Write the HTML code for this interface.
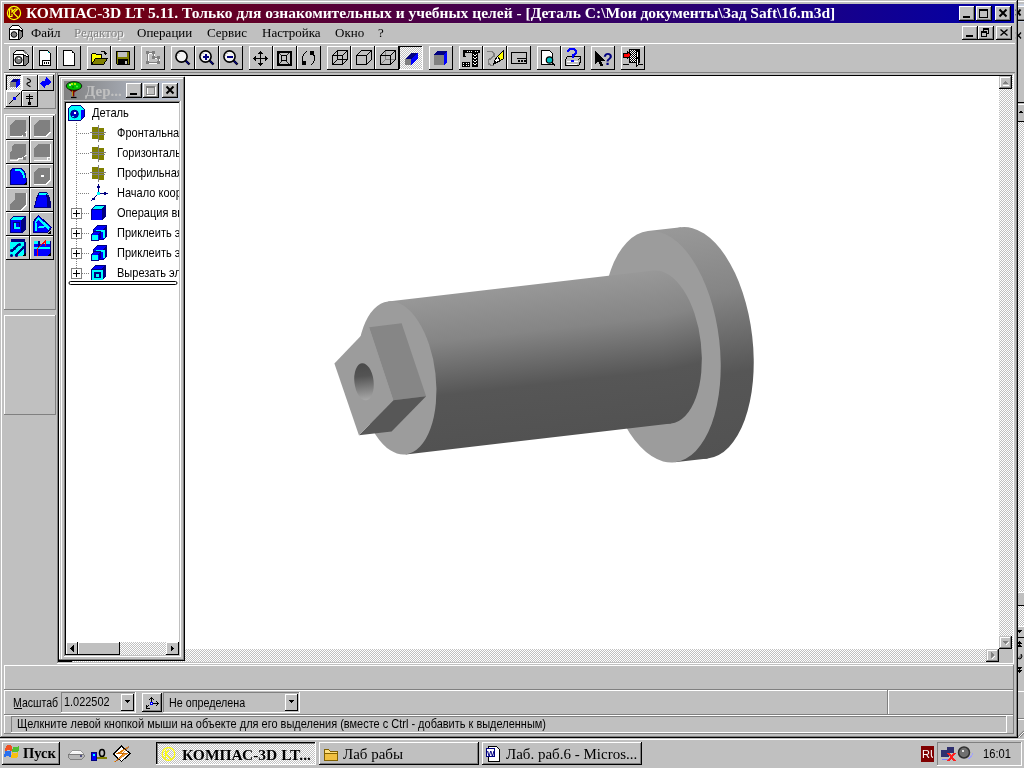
<!DOCTYPE html>
<html><head><meta charset="utf-8"><title>KOMPAS-3D LT</title>
<style>html,body{margin:0;padding:0;width:1024px;height:768px;overflow:hidden;background:#c0c0c0} text{text-rendering:optimizeLegibility}</style>
</head><body>
<svg width="1024" height="768" viewBox="0 0 1024 768" shape-rendering="crispEdges" style="display:block;will-change:transform">
<defs>
<pattern id="dith" width="2" height="2" patternUnits="userSpaceOnUse"><rect width="2" height="2" fill="#c0c0c0"/><rect x="0" y="0" width="1" height="1" fill="#fff"/><rect x="1" y="1" width="1" height="1" fill="#fff"/></pattern>
<pattern id="dith2w" width="2" height="2" patternUnits="userSpaceOnUse"><rect width="2" height="2" fill="#000"/><rect x="0" y="0" width="1" height="1" fill="#fff"/><rect x="1" y="1" width="1" height="1" fill="#fff"/></pattern>
<pattern id="dith2" width="2" height="2" patternUnits="userSpaceOnUse"><rect width="2" height="2" fill="#000"/><rect x="0" y="0" width="1" height="1" fill="#808080"/><rect x="1" y="1" width="1" height="1" fill="#808080"/></pattern>
<linearGradient id="tg" x1="0" x2="1" y1="0" y2="0"><stop offset="0" stop-color="#800000"/><stop offset="1" stop-color="#0000a8"/></linearGradient><linearGradient id="cg" x1="0" x2="1" y1="0" y2="0"><stop offset="0" stop-color="#808080"/><stop offset="1" stop-color="#c0c8d8"/></linearGradient><linearGradient id="shg" gradientUnits="userSpaceOnUse" x1="394" y1="300" x2="411" y2="453"><stop offset="0" stop-color="#989898"/><stop offset="0.3" stop-color="#858585"/><stop offset="0.65" stop-color="#565656"/><stop offset="1" stop-color="#525252"/></linearGradient><linearGradient id="rimg" gradientUnits="userSpaceOnUse" x1="680" y1="229" x2="695" y2="461"><stop offset="0" stop-color="#989898"/><stop offset="0.3" stop-color="#858585"/><stop offset="0.65" stop-color="#565656"/><stop offset="1" stop-color="#525252"/></linearGradient><linearGradient id="holeg" x1="0" y1="0" x2="0" y2="1"><stop offset="0" stop-color="#4a4a4a"/><stop offset="0.35" stop-color="#545454"/><stop offset="1" stop-color="#a8a8a8"/></linearGradient>
</defs>
<rect x="0" y="0" width="1024" height="768" fill="#c0c0c0"/>
<rect x="1018" y="0" width="6" height="738" fill="#c0c0c0"/>
<rect x="1018" y="1" width="6" height="1" fill="#fff"/>
<rect x="1018" y="4" width="6" height="18" fill="#c8d0e0"/>
<rect x="1018" y="6" width="6" height="14" fill="#c0c0c0"/>
<rect x="1018" y="6" width="6" height="1" fill="#fff"/>
<rect x="1018" y="19" width="6" height="1" fill="#808080"/>
<rect x="1018" y="20" width="6" height="1" fill="#000"/>
<path d="M1016 9.5 L1020.5 15.5 M1020.5 9.5 L1016 15.5" stroke="#000" stroke-width="2" shape-rendering="geometricPrecision"/>
<path d="M1016 32.5 L1021 38.5 M1021 32.5 L1016 38.5" stroke="#000" stroke-width="1.2" shape-rendering="geometricPrecision"/>
<rect x="1018" y="102" width="6" height="1" fill="#000"/>
<rect x="1018" y="104" width="6" height="1" fill="#fff"/>
<rect x="1018" y="105" width="6" height="16" fill="#c0c0c0"/>
<rect x="1018" y="121" width="6" height="1" fill="#000"/>
<path d="M1018 113 L1021 110 L1023 113 Z" fill="#000"/>
<rect x="1018" y="122" width="6" height="470" fill="url(#dith)"/>
<rect x="1018" y="592" width="6" height="1" fill="#fff"/>
<rect x="1018" y="593" width="6" height="12" fill="#c0c0c0"/>
<rect x="1018" y="605" width="6" height="1" fill="#000"/>
<rect x="1018" y="606" width="6" height="20" fill="url(#dith)"/>
<rect x="1018" y="626" width="6" height="1" fill="#fff"/>
<rect x="1018" y="627" width="6" height="10" fill="#c0c0c0"/>
<rect x="1018" y="637" width="6" height="1" fill="#000"/>
<path d="M1017 630 H1022 L1019.5 633 Z" fill="#000"/>
<path d="M1017 644 L1019.5 641 L1022 644 Z M1017 647 L1019.5 644 L1022 647 Z" fill="#000"/>
<path d="M1021 654 Q1023 656 1021 658.5 Q1019 659.5 1018 658" stroke="#000" stroke-width="1" fill="#808080" shape-rendering="geometricPrecision"/>
<path d="M1017 667 H1022 L1019.5 670 Z M1017 670 H1022 L1019.5 673 Z" fill="#000"/>
<rect x="1018" y="691" width="6" height="1" fill="#fff"/>
<rect x="1018" y="718" width="6" height="1" fill="#808080"/>
<rect x="1018" y="719" width="6" height="1" fill="#fff"/>
<path d="M1018 737 L1024 731 M1020 737 L1024 733" stroke="#808080" stroke-width="1.2" shape-rendering="geometricPrecision"/><path d="M1019 737 L1024 732" stroke="#fff" stroke-width="1" shape-rendering="geometricPrecision"/>
<rect x="0" y="0" width="1018" height="1" fill="#c0c0c0"/>
<rect x="0" y="0" width="1" height="738" fill="#c0c0c0"/>
<rect x="1" y="1" width="1016" height="1" fill="#fff"/>
<rect x="1" y="1" width="1" height="736" fill="#fff"/>
<rect x="0" y="737" width="1018" height="1" fill="#000"/>
<rect x="1017" y="0" width="1" height="738" fill="#000"/>
<rect x="1" y="736" width="1016" height="1" fill="#808080"/>
<rect x="1016" y="1" width="1" height="736" fill="#808080"/>
<rect x="4" y="4" width="1010" height="19" fill="url(#tg)"/>
<rect x="4" y="23" width="1010" height="1" fill="#c8c8c0"/>
<g fill="none" stroke="#ffff00" stroke-width="1.2" shape-rendering="geometricPrecision"><circle cx="14" cy="13" r="6.6"/><path d="M9.5 9 H12 V12 L15 9 H17.5 L13.5 13 L18 17.5 M9.5 9 V16.5 H12 V14"/></g>
<text x="26" y="18" font-family='"Liberation Serif", serif' font-size="15.5" fill="#fff" font-weight="bold" >КОМПАС-3D LT 5.11. Только для ознакомительных и учебных целей - [Деталь C:\Мои документы\Зад Saft\1б.m3d]</text>
<rect x="959" y="6" width="16" height="15" fill="#c0c0c0"/>
<rect x="960" y="19" width="14" height="1" fill="#808080"/>
<rect x="973" y="7" width="1" height="13" fill="#808080"/>
<rect x="959" y="6" width="16" height="1" fill="#fff"/>
<rect x="959" y="6" width="1" height="15" fill="#fff"/>
<rect x="959" y="20" width="16" height="1" fill="#000"/>
<rect x="974" y="6" width="1" height="15" fill="#000"/>
<rect x="963" y="16" width="7" height="2" fill="#000"/>
<rect x="976" y="6" width="16" height="15" fill="#c0c0c0"/>
<rect x="977" y="19" width="14" height="1" fill="#808080"/>
<rect x="990" y="7" width="1" height="13" fill="#808080"/>
<rect x="976" y="6" width="16" height="1" fill="#fff"/>
<rect x="976" y="6" width="1" height="15" fill="#fff"/>
<rect x="976" y="20" width="16" height="1" fill="#000"/>
<rect x="991" y="6" width="1" height="15" fill="#000"/>
<rect x="979" y="9" width="9" height="1" fill="#000"/>
<rect x="979" y="9" width="1" height="9" fill="#000"/>
<rect x="979" y="17" width="9" height="1" fill="#000"/>
<rect x="987" y="9" width="1" height="9" fill="#000"/>
<rect x="979" y="10" width="9" height="1" fill="#000"/>
<rect x="995" y="6" width="16" height="15" fill="#c0c0c0"/>
<rect x="996" y="19" width="14" height="1" fill="#808080"/>
<rect x="1009" y="7" width="1" height="13" fill="#808080"/>
<rect x="995" y="6" width="16" height="1" fill="#fff"/>
<rect x="995" y="6" width="1" height="15" fill="#fff"/>
<rect x="995" y="20" width="16" height="1" fill="#000"/>
<rect x="1010" y="6" width="1" height="15" fill="#000"/>
<path d="M999.5 9.5 L1006.5 16.5 M1006.5 9.5 L999.5 16.5" stroke="#000" stroke-width="2" shape-rendering="geometricPrecision"/>
<text x="31" y="37" font-family='"Liberation Serif", serif' font-size="13" fill="#000" font-weight="normal" >Файл</text>
<text x="75" y="38" font-family='"Liberation Serif", serif' font-size="13" fill="#fff" font-weight="normal" >Редактор</text>
<text x="74" y="37" font-family='"Liberation Serif", serif' font-size="13" fill="#808080" font-weight="normal" >Редактор</text>
<text x="137" y="37" font-family='"Liberation Serif", serif' font-size="13" fill="#000" font-weight="normal" >Операции</text>
<text x="207" y="37" font-family='"Liberation Serif", serif' font-size="13" fill="#000" font-weight="normal" >Сервис</text>
<text x="262" y="37" font-family='"Liberation Serif", serif' font-size="13" fill="#000" font-weight="normal" >Настройка</text>
<text x="335" y="37" font-family='"Liberation Serif", serif' font-size="13" fill="#000" font-weight="normal" >Окно</text>
<text x="378" y="37" font-family='"Liberation Serif", serif' font-size="13" fill="#000" font-weight="normal" >?</text>
<path d="M9.5 28.5 L12.5 25.5 H18.5 L22.5 29.5 V36.5 L19.5 39.5 H9.5 Z" fill="#fff" stroke="#000"/><path d="M18.5 29.5 L22.5 31.5 V36.5 L19.5 39.5 H18.5 Z" fill="#808080" stroke="#000"/><path d="M9.5 29.5 H18.5" stroke="#000"/>
<circle cx="14" cy="34.5" r="2.8" fill="#808080" stroke="#000" stroke-width="1" shape-rendering="geometricPrecision"/>
<rect x="962" y="26" width="16" height="14" fill="#c0c0c0"/>
<rect x="963" y="38" width="14" height="1" fill="#808080"/>
<rect x="976" y="27" width="1" height="12" fill="#808080"/>
<rect x="962" y="26" width="16" height="1" fill="#fff"/>
<rect x="962" y="26" width="1" height="14" fill="#fff"/>
<rect x="962" y="39" width="16" height="1" fill="#000"/>
<rect x="977" y="26" width="1" height="14" fill="#000"/>
<rect x="966" y="35" width="7" height="2" fill="#000"/>
<rect x="978" y="26" width="16" height="14" fill="#c0c0c0"/>
<rect x="979" y="38" width="14" height="1" fill="#808080"/>
<rect x="992" y="27" width="1" height="12" fill="#808080"/>
<rect x="978" y="26" width="16" height="1" fill="#fff"/>
<rect x="978" y="26" width="1" height="14" fill="#fff"/>
<rect x="978" y="39" width="16" height="1" fill="#000"/>
<rect x="993" y="26" width="1" height="14" fill="#000"/>
<rect x="983" y="28" width="6" height="1" fill="#000"/>
<rect x="983" y="28" width="1" height="6" fill="#000"/>
<rect x="983" y="33" width="6" height="1" fill="#000"/>
<rect x="988" y="28" width="1" height="6" fill="#000"/>
<rect x="983" y="29" width="6" height="1" fill="#000"/>
<rect x="981" y="31" width="6" height="6" fill="#c0c0c0"/>
<rect x="981" y="31" width="6" height="1" fill="#000"/>
<rect x="981" y="31" width="1" height="6" fill="#000"/>
<rect x="981" y="36" width="6" height="1" fill="#000"/>
<rect x="986" y="31" width="1" height="6" fill="#000"/>
<rect x="981" y="32" width="6" height="1" fill="#000"/>
<rect x="996" y="26" width="16" height="14" fill="#c0c0c0"/>
<rect x="997" y="38" width="14" height="1" fill="#808080"/>
<rect x="1010" y="27" width="1" height="12" fill="#808080"/>
<rect x="996" y="26" width="16" height="1" fill="#fff"/>
<rect x="996" y="26" width="1" height="14" fill="#fff"/>
<rect x="996" y="39" width="16" height="1" fill="#000"/>
<rect x="1011" y="26" width="1" height="14" fill="#000"/>
<path d="M1000.5 29.5 L1007.5 35.5 M1007.5 29.5 L1000.5 35.5" stroke="#000" stroke-width="1.4" shape-rendering="geometricPrecision"/>
<rect x="4" y="43" width="1011" height="1" fill="#fff"/>
<rect x="9" y="46" width="24" height="24" fill="#c0c0c0"/>
<rect x="9" y="46" width="24" height="1" fill="#fff"/>
<rect x="9" y="46" width="1" height="24" fill="#fff"/>
<rect x="9" y="69" width="24" height="1" fill="#000"/>
<rect x="32" y="46" width="1" height="24" fill="#000"/>
<rect x="33" y="46" width="24" height="24" fill="#c0c0c0"/>
<rect x="33" y="46" width="24" height="1" fill="#fff"/>
<rect x="33" y="46" width="1" height="24" fill="#fff"/>
<rect x="33" y="69" width="24" height="1" fill="#000"/>
<rect x="56" y="46" width="1" height="24" fill="#000"/>
<rect x="57" y="46" width="24" height="24" fill="#c0c0c0"/>
<rect x="57" y="46" width="24" height="1" fill="#fff"/>
<rect x="57" y="46" width="1" height="24" fill="#fff"/>
<rect x="57" y="69" width="24" height="1" fill="#000"/>
<rect x="80" y="46" width="1" height="24" fill="#000"/>
<rect x="87" y="46" width="24" height="24" fill="#c0c0c0"/>
<rect x="87" y="46" width="24" height="1" fill="#fff"/>
<rect x="87" y="46" width="1" height="24" fill="#fff"/>
<rect x="87" y="69" width="24" height="1" fill="#000"/>
<rect x="110" y="46" width="1" height="24" fill="#000"/>
<rect x="111" y="46" width="24" height="24" fill="#c0c0c0"/>
<rect x="111" y="46" width="24" height="1" fill="#fff"/>
<rect x="111" y="46" width="1" height="24" fill="#fff"/>
<rect x="111" y="69" width="24" height="1" fill="#000"/>
<rect x="134" y="46" width="1" height="24" fill="#000"/>
<rect x="141" y="46" width="24" height="24" fill="#c0c0c0"/>
<rect x="141" y="46" width="24" height="1" fill="#fff"/>
<rect x="141" y="46" width="1" height="24" fill="#fff"/>
<rect x="141" y="69" width="24" height="1" fill="#000"/>
<rect x="164" y="46" width="1" height="24" fill="#000"/>
<rect x="171" y="46" width="24" height="24" fill="#c0c0c0"/>
<rect x="171" y="46" width="24" height="1" fill="#fff"/>
<rect x="171" y="46" width="1" height="24" fill="#fff"/>
<rect x="171" y="69" width="24" height="1" fill="#000"/>
<rect x="194" y="46" width="1" height="24" fill="#000"/>
<rect x="195" y="46" width="24" height="24" fill="#c0c0c0"/>
<rect x="195" y="46" width="24" height="1" fill="#fff"/>
<rect x="195" y="46" width="1" height="24" fill="#fff"/>
<rect x="195" y="69" width="24" height="1" fill="#000"/>
<rect x="218" y="46" width="1" height="24" fill="#000"/>
<rect x="219" y="46" width="24" height="24" fill="#c0c0c0"/>
<rect x="219" y="46" width="24" height="1" fill="#fff"/>
<rect x="219" y="46" width="1" height="24" fill="#fff"/>
<rect x="219" y="69" width="24" height="1" fill="#000"/>
<rect x="242" y="46" width="1" height="24" fill="#000"/>
<rect x="249" y="46" width="24" height="24" fill="#c0c0c0"/>
<rect x="249" y="46" width="24" height="1" fill="#fff"/>
<rect x="249" y="46" width="1" height="24" fill="#fff"/>
<rect x="249" y="69" width="24" height="1" fill="#000"/>
<rect x="272" y="46" width="1" height="24" fill="#000"/>
<rect x="273" y="46" width="24" height="24" fill="#c0c0c0"/>
<rect x="273" y="46" width="24" height="1" fill="#fff"/>
<rect x="273" y="46" width="1" height="24" fill="#fff"/>
<rect x="273" y="69" width="24" height="1" fill="#000"/>
<rect x="296" y="46" width="1" height="24" fill="#000"/>
<rect x="297" y="46" width="24" height="24" fill="#c0c0c0"/>
<rect x="297" y="46" width="24" height="1" fill="#fff"/>
<rect x="297" y="46" width="1" height="24" fill="#fff"/>
<rect x="297" y="69" width="24" height="1" fill="#000"/>
<rect x="320" y="46" width="1" height="24" fill="#000"/>
<rect x="327" y="46" width="24" height="24" fill="#c0c0c0"/>
<rect x="327" y="46" width="24" height="1" fill="#fff"/>
<rect x="327" y="46" width="1" height="24" fill="#fff"/>
<rect x="327" y="69" width="24" height="1" fill="#000"/>
<rect x="350" y="46" width="1" height="24" fill="#000"/>
<rect x="351" y="46" width="24" height="24" fill="#c0c0c0"/>
<rect x="351" y="46" width="24" height="1" fill="#fff"/>
<rect x="351" y="46" width="1" height="24" fill="#fff"/>
<rect x="351" y="69" width="24" height="1" fill="#000"/>
<rect x="374" y="46" width="1" height="24" fill="#000"/>
<rect x="375" y="46" width="24" height="24" fill="#c0c0c0"/>
<rect x="375" y="46" width="24" height="1" fill="#fff"/>
<rect x="375" y="46" width="1" height="24" fill="#fff"/>
<rect x="375" y="69" width="24" height="1" fill="#000"/>
<rect x="398" y="46" width="1" height="24" fill="#000"/>
<rect x="429" y="46" width="24" height="24" fill="#c0c0c0"/>
<rect x="429" y="46" width="24" height="1" fill="#fff"/>
<rect x="429" y="46" width="1" height="24" fill="#fff"/>
<rect x="429" y="69" width="24" height="1" fill="#000"/>
<rect x="452" y="46" width="1" height="24" fill="#000"/>
<rect x="459" y="46" width="24" height="24" fill="#c0c0c0"/>
<rect x="459" y="46" width="24" height="1" fill="#fff"/>
<rect x="459" y="46" width="1" height="24" fill="#fff"/>
<rect x="459" y="69" width="24" height="1" fill="#000"/>
<rect x="482" y="46" width="1" height="24" fill="#000"/>
<rect x="483" y="46" width="24" height="24" fill="#c0c0c0"/>
<rect x="483" y="46" width="24" height="1" fill="#fff"/>
<rect x="483" y="46" width="1" height="24" fill="#fff"/>
<rect x="483" y="69" width="24" height="1" fill="#000"/>
<rect x="506" y="46" width="1" height="24" fill="#000"/>
<rect x="507" y="46" width="24" height="24" fill="#c0c0c0"/>
<rect x="507" y="46" width="24" height="1" fill="#fff"/>
<rect x="507" y="46" width="1" height="24" fill="#fff"/>
<rect x="507" y="69" width="24" height="1" fill="#000"/>
<rect x="530" y="46" width="1" height="24" fill="#000"/>
<rect x="537" y="46" width="24" height="24" fill="#c0c0c0"/>
<rect x="537" y="46" width="24" height="1" fill="#fff"/>
<rect x="537" y="46" width="1" height="24" fill="#fff"/>
<rect x="537" y="69" width="24" height="1" fill="#000"/>
<rect x="560" y="46" width="1" height="24" fill="#000"/>
<rect x="561" y="46" width="24" height="24" fill="#c0c0c0"/>
<rect x="561" y="46" width="24" height="1" fill="#fff"/>
<rect x="561" y="46" width="1" height="24" fill="#fff"/>
<rect x="561" y="69" width="24" height="1" fill="#000"/>
<rect x="584" y="46" width="1" height="24" fill="#000"/>
<rect x="591" y="46" width="24" height="24" fill="#c0c0c0"/>
<rect x="591" y="46" width="24" height="1" fill="#fff"/>
<rect x="591" y="46" width="1" height="24" fill="#fff"/>
<rect x="591" y="69" width="24" height="1" fill="#000"/>
<rect x="614" y="46" width="1" height="24" fill="#000"/>
<rect x="621" y="46" width="24" height="24" fill="#c0c0c0"/>
<rect x="621" y="46" width="24" height="1" fill="#fff"/>
<rect x="621" y="46" width="1" height="24" fill="#fff"/>
<rect x="621" y="69" width="24" height="1" fill="#000"/>
<rect x="644" y="46" width="1" height="24" fill="#000"/>
<rect x="399" y="46" width="24" height="24" fill="url(#dith)"/>
<rect x="399" y="46" width="24" height="1" fill="#000"/>
<rect x="399" y="46" width="1" height="24" fill="#000"/>
<rect x="399" y="69" width="24" height="1" fill="#fff"/>
<rect x="422" y="46" width="1" height="24" fill="#fff"/>
<rect x="4" y="72" width="1011" height="1" fill="#808080"/>
<rect x="58" y="75" width="954" height="1" fill="#000"/>
<rect x="4" y="73" width="52" height="36" fill="#c0c0c0"/>
<rect x="4" y="73" width="52" height="1" fill="#fff"/>
<rect x="4" y="73" width="1" height="36" fill="#fff"/>
<rect x="4" y="108" width="52" height="1" fill="#808080"/>
<rect x="55" y="73" width="1" height="36" fill="#808080"/>
<rect x="6" y="75" width="16" height="16" fill="url(#dith)"/>
<rect x="6" y="75" width="16" height="1" fill="#000"/>
<rect x="6" y="75" width="1" height="16" fill="#000"/>
<rect x="6" y="90" width="16" height="1" fill="#fff"/>
<rect x="21" y="75" width="1" height="16" fill="#fff"/>
<rect x="22" y="75" width="16" height="16" fill="#c0c0c0"/>
<rect x="22" y="75" width="16" height="1" fill="#fff"/>
<rect x="22" y="75" width="1" height="16" fill="#fff"/>
<rect x="22" y="90" width="16" height="1" fill="#000"/>
<rect x="37" y="75" width="1" height="16" fill="#000"/>
<rect x="38" y="75" width="16" height="16" fill="#c0c0c0"/>
<rect x="38" y="75" width="16" height="1" fill="#fff"/>
<rect x="38" y="75" width="1" height="16" fill="#fff"/>
<rect x="38" y="90" width="16" height="1" fill="#000"/>
<rect x="53" y="75" width="1" height="16" fill="#000"/>
<rect x="6" y="91" width="16" height="16" fill="#c0c0c0"/>
<rect x="6" y="91" width="16" height="1" fill="#fff"/>
<rect x="6" y="91" width="1" height="16" fill="#fff"/>
<rect x="6" y="106" width="16" height="1" fill="#000"/>
<rect x="21" y="91" width="1" height="16" fill="#000"/>
<rect x="22" y="91" width="16" height="16" fill="#c0c0c0"/>
<rect x="22" y="91" width="16" height="1" fill="#fff"/>
<rect x="22" y="91" width="1" height="16" fill="#fff"/>
<rect x="22" y="106" width="16" height="1" fill="#000"/>
<rect x="37" y="91" width="1" height="16" fill="#000"/>
<rect x="4" y="114" width="52" height="196" fill="#c0c0c0"/>
<rect x="4" y="114" width="52" height="1" fill="#fff"/>
<rect x="4" y="114" width="1" height="196" fill="#fff"/>
<rect x="4" y="309" width="52" height="1" fill="#808080"/>
<rect x="55" y="114" width="1" height="196" fill="#808080"/>
<rect x="6" y="116" width="24" height="24" fill="#c0c0c0"/>
<rect x="6" y="116" width="24" height="1" fill="#fff"/>
<rect x="6" y="116" width="1" height="24" fill="#fff"/>
<rect x="6" y="139" width="24" height="1" fill="#000"/>
<rect x="29" y="116" width="1" height="24" fill="#000"/>
<rect x="30" y="116" width="24" height="24" fill="#c0c0c0"/>
<rect x="30" y="116" width="24" height="1" fill="#fff"/>
<rect x="30" y="116" width="1" height="24" fill="#fff"/>
<rect x="30" y="139" width="24" height="1" fill="#000"/>
<rect x="53" y="116" width="1" height="24" fill="#000"/>
<rect x="6" y="140" width="24" height="24" fill="#c0c0c0"/>
<rect x="6" y="140" width="24" height="1" fill="#fff"/>
<rect x="6" y="140" width="1" height="24" fill="#fff"/>
<rect x="6" y="163" width="24" height="1" fill="#000"/>
<rect x="29" y="140" width="1" height="24" fill="#000"/>
<rect x="30" y="140" width="24" height="24" fill="#c0c0c0"/>
<rect x="30" y="140" width="24" height="1" fill="#fff"/>
<rect x="30" y="140" width="1" height="24" fill="#fff"/>
<rect x="30" y="163" width="24" height="1" fill="#000"/>
<rect x="53" y="140" width="1" height="24" fill="#000"/>
<rect x="6" y="164" width="24" height="24" fill="#c0c0c0"/>
<rect x="6" y="164" width="24" height="1" fill="#fff"/>
<rect x="6" y="164" width="1" height="24" fill="#fff"/>
<rect x="6" y="187" width="24" height="1" fill="#000"/>
<rect x="29" y="164" width="1" height="24" fill="#000"/>
<rect x="30" y="164" width="24" height="24" fill="#c0c0c0"/>
<rect x="30" y="164" width="24" height="1" fill="#fff"/>
<rect x="30" y="164" width="1" height="24" fill="#fff"/>
<rect x="30" y="187" width="24" height="1" fill="#000"/>
<rect x="53" y="164" width="1" height="24" fill="#000"/>
<rect x="6" y="188" width="24" height="24" fill="#c0c0c0"/>
<rect x="6" y="188" width="24" height="1" fill="#fff"/>
<rect x="6" y="188" width="1" height="24" fill="#fff"/>
<rect x="6" y="211" width="24" height="1" fill="#000"/>
<rect x="29" y="188" width="1" height="24" fill="#000"/>
<rect x="30" y="188" width="24" height="24" fill="#c0c0c0"/>
<rect x="30" y="188" width="24" height="1" fill="#fff"/>
<rect x="30" y="188" width="1" height="24" fill="#fff"/>
<rect x="30" y="211" width="24" height="1" fill="#000"/>
<rect x="53" y="188" width="1" height="24" fill="#000"/>
<rect x="6" y="212" width="24" height="24" fill="#c0c0c0"/>
<rect x="6" y="212" width="24" height="1" fill="#fff"/>
<rect x="6" y="212" width="1" height="24" fill="#fff"/>
<rect x="6" y="235" width="24" height="1" fill="#000"/>
<rect x="29" y="212" width="1" height="24" fill="#000"/>
<rect x="30" y="212" width="24" height="24" fill="#c0c0c0"/>
<rect x="30" y="212" width="24" height="1" fill="#fff"/>
<rect x="30" y="212" width="1" height="24" fill="#fff"/>
<rect x="30" y="235" width="24" height="1" fill="#000"/>
<rect x="53" y="212" width="1" height="24" fill="#000"/>
<rect x="6" y="236" width="24" height="24" fill="#c0c0c0"/>
<rect x="6" y="236" width="24" height="1" fill="#fff"/>
<rect x="6" y="236" width="1" height="24" fill="#fff"/>
<rect x="6" y="259" width="24" height="1" fill="#000"/>
<rect x="29" y="236" width="1" height="24" fill="#000"/>
<rect x="30" y="236" width="24" height="24" fill="#c0c0c0"/>
<rect x="30" y="236" width="24" height="1" fill="#fff"/>
<rect x="30" y="236" width="1" height="24" fill="#fff"/>
<rect x="30" y="259" width="24" height="1" fill="#000"/>
<rect x="53" y="236" width="1" height="24" fill="#000"/>
<rect x="4" y="315" width="52" height="100" fill="#c0c0c0"/>
<rect x="4" y="315" width="52" height="1" fill="#fff"/>
<rect x="4" y="315" width="1" height="100" fill="#fff"/>
<rect x="4" y="414" width="52" height="1" fill="#808080"/>
<rect x="55" y="315" width="1" height="100" fill="#808080"/>
<rect x="57" y="73" width="1" height="590" fill="#808080"/>
<rect x="58" y="75" width="1" height="587" fill="#000"/>
<rect x="59" y="76" width="940" height="573" fill="#fff"/>
<rect x="1013" y="74" width="1" height="590" fill="#fff"/>
<rect x="57" y="663" width="957" height="1" fill="#fff"/>
<rect x="999" y="76" width="14" height="573" fill="url(#dith)"/>
<rect x="999" y="76" width="13" height="13" fill="#c0c0c0"/>
<rect x="1000" y="77" width="11" height="1" fill="#fff"/>
<rect x="1000" y="77" width="1" height="11" fill="#fff"/>
<rect x="1000" y="87" width="11" height="1" fill="#808080"/>
<rect x="1010" y="77" width="1" height="11" fill="#808080"/>
<rect x="999" y="76" width="13" height="1" fill="#c0c0c0"/>
<rect x="999" y="76" width="1" height="13" fill="#c0c0c0"/>
<rect x="999" y="88" width="13" height="1" fill="#000"/>
<rect x="1011" y="76" width="1" height="13" fill="#000"/>
<rect x="999" y="636" width="13" height="13" fill="#c0c0c0"/>
<rect x="1000" y="637" width="11" height="1" fill="#fff"/>
<rect x="1000" y="637" width="1" height="11" fill="#fff"/>
<rect x="1000" y="647" width="11" height="1" fill="#808080"/>
<rect x="1010" y="637" width="1" height="11" fill="#808080"/>
<rect x="999" y="636" width="13" height="1" fill="#c0c0c0"/>
<rect x="999" y="636" width="1" height="13" fill="#c0c0c0"/>
<rect x="999" y="648" width="13" height="1" fill="#000"/>
<rect x="1011" y="636" width="1" height="13" fill="#000"/>
<path d="M1002 84 H1008 L1005 81 Z" fill="#808080"/><path d="M1003 85 H1009" stroke="#fff" stroke-width="1"/>
<path d="M1002 641 H1008 L1005 644 Z" fill="#808080"/><path d="M1006 645 L1009 642" stroke="#fff" stroke-width="1"/>
<rect x="59" y="649" width="927" height="13" fill="url(#dith)"/>
<rect x="58" y="661" width="14" height="1" fill="#000"/>
<rect x="986" y="649" width="13" height="13" fill="#c0c0c0"/>
<rect x="987" y="650" width="11" height="1" fill="#fff"/>
<rect x="987" y="650" width="1" height="11" fill="#fff"/>
<rect x="987" y="660" width="11" height="1" fill="#808080"/>
<rect x="997" y="650" width="1" height="11" fill="#808080"/>
<rect x="986" y="649" width="13" height="1" fill="#c0c0c0"/>
<rect x="986" y="649" width="1" height="13" fill="#c0c0c0"/>
<rect x="986" y="661" width="13" height="1" fill="#000"/>
<rect x="998" y="649" width="1" height="13" fill="#000"/>
<path d="M991 652 V658 L994 655 Z" fill="#808080"/><path d="M992 659 L995 656" stroke="#fff" stroke-width="1"/>
<rect x="999" y="649" width="14" height="13" fill="#c0c0c0"/>
<rect x="59" y="76" width="126" height="585" fill="#c0c0c0"/>
<rect x="59" y="76" width="1" height="584" fill="#fff"/>
<rect x="59" y="76" width="125" height="1" fill="#fff"/>
<rect x="61" y="78" width="1" height="581" fill="#fff"/>
<rect x="61" y="78" width="122" height="1" fill="#fff"/>
<rect x="184" y="77" width="1" height="584" fill="#000"/>
<rect x="58" y="660" width="127" height="1" fill="#000"/>
<rect x="183" y="77" width="1" height="583" fill="#808080"/>
<rect x="59" y="659" width="125" height="1" fill="#808080"/>
<rect x="64" y="81" width="116" height="19" fill="url(#cg)"/>
<text x="85" y="96" font-family='"Liberation Serif", serif' font-size="15" fill="#c0c0c0" font-weight="bold" >Дер...</text>
<rect x="126" y="83" width="16" height="15" fill="#c0c0c0"/>
<rect x="127" y="96" width="14" height="1" fill="#808080"/>
<rect x="140" y="84" width="1" height="13" fill="#808080"/>
<rect x="126" y="83" width="16" height="1" fill="#fff"/>
<rect x="126" y="83" width="1" height="15" fill="#fff"/>
<rect x="126" y="97" width="16" height="1" fill="#000"/>
<rect x="141" y="83" width="1" height="15" fill="#000"/>
<rect x="130" y="93" width="7" height="2" fill="#000"/>
<rect x="143" y="83" width="16" height="15" fill="#c0c0c0"/>
<rect x="144" y="96" width="14" height="1" fill="#808080"/>
<rect x="157" y="84" width="1" height="13" fill="#808080"/>
<rect x="143" y="83" width="16" height="1" fill="#fff"/>
<rect x="143" y="83" width="1" height="15" fill="#fff"/>
<rect x="143" y="97" width="16" height="1" fill="#000"/>
<rect x="158" y="83" width="1" height="15" fill="#000"/>
<rect x="147" y="87" width="9" height="1" fill="#fff"/>
<rect x="147" y="87" width="1" height="9" fill="#fff"/>
<rect x="147" y="95" width="9" height="1" fill="#fff"/>
<rect x="155" y="87" width="1" height="9" fill="#fff"/>
<rect x="146" y="86" width="9" height="1" fill="#808080"/>
<rect x="146" y="86" width="1" height="9" fill="#808080"/>
<rect x="146" y="94" width="9" height="1" fill="#808080"/>
<rect x="154" y="86" width="1" height="9" fill="#808080"/>
<rect x="146" y="87" width="9" height="1" fill="#808080"/>
<rect x="162" y="83" width="16" height="15" fill="#c0c0c0"/>
<rect x="163" y="96" width="14" height="1" fill="#808080"/>
<rect x="176" y="84" width="1" height="13" fill="#808080"/>
<rect x="162" y="83" width="16" height="1" fill="#fff"/>
<rect x="162" y="83" width="1" height="15" fill="#fff"/>
<rect x="162" y="97" width="16" height="1" fill="#000"/>
<rect x="177" y="83" width="1" height="15" fill="#000"/>
<path d="M166.5 86.5 L173.5 93.5 M173.5 86.5 L166.5 93.5" stroke="#000" stroke-width="2" shape-rendering="geometricPrecision"/>
<g shape-rendering="geometricPrecision"><path d="M73.5 89 V96.5 M73.5 92 L70 89.5 M73.5 92 L77 89.5" stroke="#800000" stroke-width="1.6" fill="none"/><path d="M72.5 89.5 V96" stroke="#c0a000" stroke-width="0.8"/><path d="M71 97.5 H76.5" stroke="#000" stroke-width="1.2"/><ellipse cx="74" cy="86" rx="7.8" ry="4.3" fill="#00c000" stroke="#000" stroke-width="0.8"/><circle cx="70" cy="85" r="0.9" fill="#fff"/><circle cx="72" cy="84" r="0.9" fill="#ffff00"/><circle cx="75" cy="84" r="0.9" fill="#ffff00"/><circle cx="77" cy="86.5" r="1" fill="#40ff40"/><circle cx="73" cy="87" r="1" fill="#008000"/></g>
<rect x="66" y="103" width="113" height="552" fill="#fff"/>
<rect x="64" y="101" width="117" height="1" fill="#808080"/>
<rect x="64" y="101" width="1" height="556" fill="#808080"/>
<rect x="65" y="102" width="115" height="1" fill="#000"/>
<rect x="65" y="102" width="1" height="554" fill="#000"/>
<rect x="179" y="102" width="1" height="554" fill="#c0c0c0"/>
<rect x="65" y="655" width="115" height="1" fill="#c0c0c0"/>
<rect x="180" y="101" width="1" height="556" fill="#fff"/>
<rect x="64" y="656" width="117" height="1" fill="#fff"/>
<rect x="66" y="642" width="113" height="13" fill="url(#dith)"/>
<rect x="66" y="642" width="12" height="13" fill="#c0c0c0"/>
<rect x="66" y="642" width="12" height="1" fill="#fff"/>
<rect x="66" y="642" width="1" height="13" fill="#fff"/>
<rect x="66" y="654" width="12" height="1" fill="#000"/>
<rect x="77" y="642" width="1" height="13" fill="#000"/>
<rect x="78" y="642" width="42" height="13" fill="#c0c0c0"/>
<rect x="78" y="642" width="42" height="1" fill="#fff"/>
<rect x="78" y="642" width="1" height="13" fill="#fff"/>
<rect x="78" y="654" width="42" height="1" fill="#000"/>
<rect x="119" y="642" width="1" height="13" fill="#000"/>
<rect x="166" y="642" width="13" height="13" fill="#c0c0c0"/>
<rect x="166" y="642" width="13" height="1" fill="#fff"/>
<rect x="166" y="642" width="1" height="13" fill="#fff"/>
<rect x="166" y="654" width="13" height="1" fill="#000"/>
<rect x="178" y="642" width="1" height="13" fill="#000"/>
<path d="M70 648.5 L73.5 645 V652 Z" fill="#000"/><path d="M174 648.5 L170.5 645 V652 Z" fill="#000"/>
<rect x="4" y="665" width="1010" height="25" fill="#c0c0c0"/>
<rect x="4" y="665" width="1010" height="1" fill="#fff"/>
<rect x="4" y="665" width="1" height="25" fill="#fff"/>
<rect x="4" y="689" width="1010" height="1" fill="#808080"/>
<rect x="1013" y="665" width="1" height="25" fill="#808080"/>
<rect x="4" y="690" width="1010" height="25" fill="#c0c0c0"/>
<rect x="4" y="690" width="1010" height="1" fill="#fff"/>
<rect x="4" y="690" width="1" height="25" fill="#fff"/>
<rect x="4" y="714" width="1010" height="1" fill="#808080"/>
<rect x="1013" y="690" width="1" height="25" fill="#808080"/>
<rect x="887" y="690" width="1" height="25" fill="#808080"/>
<rect x="888" y="691" width="1" height="23" fill="#fff"/>
<text transform="translate(13 707) scale(0.88 1)" x="0" y="0" font-family='"Liberation Sans", sans-serif' font-size="12" fill="#000" >Масштаб</text>
<rect x="14" y="708" width="8" height="1" fill="#000"/>
<rect x="61" y="692" width="75" height="21" fill="#c0c0c0"/>
<rect x="61" y="692" width="75" height="1" fill="#808080"/>
<rect x="61" y="692" width="1" height="21" fill="#808080"/>
<rect x="61" y="712" width="75" height="1" fill="#fff"/>
<rect x="135" y="692" width="1" height="21" fill="#fff"/>
<text transform="translate(64 706) scale(0.91 1)" x="0" y="0" font-family='"Liberation Sans", sans-serif' font-size="12" fill="#000" >1.022502</text>
<rect x="121" y="694" width="13" height="17" fill="#c0c0c0"/>
<rect x="121" y="694" width="13" height="1" fill="#fff"/>
<rect x="121" y="694" width="1" height="17" fill="#fff"/>
<rect x="121" y="710" width="13" height="1" fill="#000"/>
<rect x="133" y="694" width="1" height="17" fill="#000"/>
<path d="M124 700 H130 L127 703 Z" fill="#000"/>
<rect x="142" y="693" width="20" height="19" fill="#c0c0c0"/>
<rect x="143" y="710" width="18" height="1" fill="#808080"/>
<rect x="160" y="694" width="1" height="17" fill="#808080"/>
<rect x="142" y="693" width="20" height="1" fill="#fff"/>
<rect x="142" y="693" width="1" height="19" fill="#fff"/>
<rect x="142" y="711" width="20" height="1" fill="#000"/>
<rect x="161" y="693" width="1" height="19" fill="#000"/>
<rect x="151" y="697" width="1" height="6" fill="#000"/>
<rect x="150" y="698" width="1" height="1" fill="#000"/>
<rect x="152" y="698" width="1" height="1" fill="#000"/>
<rect x="149" y="699" width="1" height="1" fill="#000"/>
<rect x="153" y="699" width="1" height="1" fill="#000"/>
<rect x="153" y="703" width="6" height="1" fill="#000"/>
<rect x="156" y="701" width="1" height="1" fill="#000"/>
<rect x="157" y="702" width="1" height="1" fill="#000"/>
<rect x="157" y="704" width="1" height="1" fill="#000"/>
<rect x="156" y="705" width="1" height="1" fill="#000"/>
<rect x="148" y="705" width="1" height="1" fill="#000"/>
<rect x="147" y="706" width="1" height="1" fill="#000"/>
<rect x="146" y="705" width="1" height="4" fill="#000"/>
<rect x="146" y="708" width="4" height="1" fill="#000"/>
<rect x="150" y="702" width="3" height="3" fill="#0000ff"/>
<rect x="151" y="703" width="1" height="1" fill="#fff"/>
<rect x="163" y="692" width="137" height="21" fill="#c0c0c0"/>
<rect x="163" y="692" width="137" height="1" fill="#808080"/>
<rect x="163" y="692" width="1" height="21" fill="#808080"/>
<rect x="163" y="712" width="137" height="1" fill="#fff"/>
<rect x="299" y="692" width="1" height="21" fill="#fff"/>
<text transform="translate(169 707) scale(0.894 1)" x="0" y="0" font-family='"Liberation Sans", sans-serif' font-size="12" fill="#000" >Не определена</text>
<rect x="285" y="694" width="13" height="17" fill="#c0c0c0"/>
<rect x="285" y="694" width="13" height="1" fill="#fff"/>
<rect x="285" y="694" width="1" height="17" fill="#fff"/>
<rect x="285" y="710" width="13" height="1" fill="#000"/>
<rect x="297" y="694" width="1" height="17" fill="#000"/>
<path d="M288 700 H294 L291 703 Z" fill="#000"/>
<rect x="4" y="715" width="1010" height="19" fill="#c0c0c0"/>
<rect x="4" y="715" width="1010" height="1" fill="#fff"/>
<rect x="4" y="715" width="1" height="19" fill="#fff"/>
<rect x="4" y="733" width="1010" height="1" fill="#808080"/>
<rect x="1013" y="715" width="1" height="19" fill="#808080"/>
<rect x="11" y="716" width="996" height="17" fill="#c0c0c0"/>
<rect x="11" y="716" width="996" height="1" fill="#808080"/>
<rect x="11" y="716" width="1" height="17" fill="#808080"/>
<rect x="11" y="732" width="996" height="1" fill="#fff"/>
<rect x="1006" y="716" width="1" height="17" fill="#fff"/>
<text transform="translate(17 728) scale(0.915 1)" x="0" y="0" font-family='"Liberation Sans", sans-serif' font-size="12" fill="#000" >Щелкните левой кнопкой мыши на объекте для его выделения (вместе с Ctrl - добавить к выделенным)</text>
<rect x="0" y="738" width="1024" height="30" fill="#c0c0c0"/>
<rect x="0" y="739" width="1024" height="1" fill="#fff"/>
<rect x="2" y="742" width="58" height="23" fill="#c0c0c0"/>
<rect x="3" y="763" width="56" height="1" fill="#808080"/>
<rect x="58" y="743" width="1" height="21" fill="#808080"/>
<rect x="2" y="742" width="58" height="1" fill="#fff"/>
<rect x="2" y="742" width="1" height="23" fill="#fff"/>
<rect x="2" y="764" width="58" height="1" fill="#000"/>
<rect x="59" y="742" width="1" height="23" fill="#000"/>
<text x="23" y="758" font-family='"Liberation Serif", serif' font-size="14.5" fill="#000" font-weight="bold" >Пуск</text>
<rect x="156" y="742" width="160" height="23" fill="url(#dith)"/>
<rect x="156" y="742" width="160" height="1" fill="#000"/>
<rect x="156" y="742" width="1" height="23" fill="#000"/>
<rect x="157" y="743" width="158" height="1" fill="#808080"/>
<rect x="157" y="743" width="1" height="21" fill="#808080"/>
<rect x="156" y="764" width="160" height="1" fill="#fff"/>
<rect x="315" y="742" width="1" height="23" fill="#fff"/>
<text x="182" y="760" font-family='"Liberation Serif", serif' font-size="15.5" fill="#000" font-weight="bold" >КОМПАС-3D LT...</text>
<rect x="319" y="742" width="160" height="23" fill="#c0c0c0"/>
<rect x="320" y="763" width="158" height="1" fill="#808080"/>
<rect x="477" y="743" width="1" height="21" fill="#808080"/>
<rect x="319" y="742" width="160" height="1" fill="#fff"/>
<rect x="319" y="742" width="1" height="23" fill="#fff"/>
<rect x="319" y="764" width="160" height="1" fill="#000"/>
<rect x="478" y="742" width="1" height="23" fill="#000"/>
<text x="343" y="759" font-family='"Liberation Serif", serif' font-size="15" fill="#000" font-weight="normal" >Лаб рабы</text>
<rect x="482" y="742" width="160" height="23" fill="#c0c0c0"/>
<rect x="483" y="763" width="158" height="1" fill="#808080"/>
<rect x="640" y="743" width="1" height="21" fill="#808080"/>
<rect x="482" y="742" width="160" height="1" fill="#fff"/>
<rect x="482" y="742" width="1" height="23" fill="#fff"/>
<rect x="482" y="764" width="160" height="1" fill="#000"/>
<rect x="641" y="742" width="1" height="23" fill="#000"/>
<text x="506" y="759" font-family='"Liberation Serif", serif' font-size="15" fill="#000" font-weight="normal" >Лаб. раб.6 - Micros...</text>
<rect x="937" y="742" width="85" height="24" fill="#c0c0c0"/>
<rect x="937" y="742" width="85" height="1" fill="#808080"/>
<rect x="937" y="742" width="1" height="24" fill="#808080"/>
<rect x="937" y="765" width="85" height="1" fill="#fff"/>
<rect x="1021" y="742" width="1" height="24" fill="#fff"/>
<rect x="921" y="746" width="13" height="16" fill="#800000"/>
<clipPath id="ruclip"><rect x="921" y="746" width="12" height="16"/></clipPath>
<text x="922" y="758" font-family='"Liberation Sans", sans-serif' font-size="11" fill="#fff" font-weight="normal" clip-path="url(#ruclip)">RU</text>
<text transform="translate(983 758) scale(0.93 1)" x="0" y="0" font-family='"Liberation Sans", sans-serif' font-size="12" fill="#000" >16:01</text>
<path d="M13.5 53.5 L16.5 50.5 H23.5 L28.5 55.5 V62.5 L25.5 65.5 H13.5 Z" fill="#fff" stroke="#000" stroke-width="1" />
<path d="M23.5 54.5 L28.5 57.5 V62.5 L25.5 65.5 H23.5 Z" fill="#808080" stroke="#000" stroke-width="1" />
<path d="M24 51 L27 54" fill="none" stroke="#808080" stroke-width="2" />
<path d="M13.5 54.5 H23.5" fill="none" stroke="#000" stroke-width="1" />
<circle cx="18.5" cy="60" r="3.6" fill="#808080" stroke="#000" stroke-width="1" shape-rendering="geometricPrecision"/>
<rect x="18" y="58" width="2" height="1" fill="#fff"/>
<path d="M39.5 50.5 H47.5 L50.5 53.5 V65.5 H39.5 Z" fill="#fff" stroke="#000" stroke-width="1" />
<rect x="48" y="52" width="1" height="1" fill="#00ffff"/>
<path d="M42.5 60.5 H50.5 V65.5 H42.5 Z" fill="#fff" stroke="#000" stroke-width="1" />
<rect x="44" y="62" width="1" height="2" fill="#000"/>
<rect x="46" y="62" width="1" height="2" fill="#000"/>
<rect x="48" y="62" width="1" height="2" fill="#000"/>
<path d="M63.5 50.5 H71.5 L74.5 53.5 V65.5 H63.5 Z" fill="#fff" stroke="#000" stroke-width="1" />
<rect x="72" y="52" width="1" height="1" fill="#000"/>
<path d="M91.5 64.5 V54.5 L92.5 53.5 H95.5 L96.5 54.5 H101.5 V58.5" fill="#ffff00" stroke="#000" stroke-width="1" />
<path d="M91.5 64.5 L95.5 58.5 H107.5 L103.5 64.5 Z" fill="#808000" stroke="#000" stroke-width="1" />
<path d="M100.5 52.5 Q103 50 105.5 53" fill="none" stroke="#000" stroke-width="1" />
<path d="M104 53 H107 L105.5 55.5 Z" fill="#000" stroke="none" stroke-width="1" />
<path d="M116.5 51.5 H129.5 V64.5 H117.5 L116.5 63.5 Z" fill="#808000" stroke="#000" stroke-width="1" />
<rect x="118" y="52" width="9" height="5" fill="#c0c0c0"/>
<rect x="118" y="59" width="10" height="6" fill="#000"/>
<rect x="125" y="61" width="2" height="3" fill="#c0c0c0"/>
<path d="M147.5 52.5 V62.5 H158.5 V57.5 H153.5 V52.5 Z" fill="none" stroke="#fff" stroke-width="1" transform="translate(1,1)"/>
<path d="M147.5 52.5 V62.5 H158.5 V57.5 H153.5 V52.5 Z" fill="none" stroke="#808080" stroke-width="1" />
<rect x="146" y="51" width="3" height="3" fill="#808080"/>
<rect x="152" y="51" width="3" height="3" fill="#808080"/>
<rect x="146" y="61" width="3" height="3" fill="#808080"/>
<rect x="157" y="61" width="3" height="3" fill="#808080"/>
<rect x="152" y="56" width="3" height="3" fill="#808080"/>
<rect x="157" y="56" width="3" height="3" fill="#808080"/>
<circle cx="181.5" cy="56.5" r="5.6" fill="#f4f4f4" stroke="#000" stroke-width="1.6" shape-rendering="geometricPrecision"/>
<rect x="178" y="53" width="2" height="1" fill="#c0c0c0"/>
<rect x="177" y="54" width="1" height="2" fill="#c0c0c0"/>
<path d="M185.5 60.5 L189.5 64.5" fill="none" stroke="#000" stroke-width="2.4" shape-rendering="geometricPrecision"/>
<path d="M186.0 61.0 L189.0 64.0" fill="none" stroke="#000080" stroke-width="1.2" shape-rendering="geometricPrecision"/>
<circle cx="205.5" cy="56.5" r="5.6" fill="#f4f4f4" stroke="#000" stroke-width="1.6" shape-rendering="geometricPrecision"/>
<rect x="202" y="53" width="2" height="1" fill="#c0c0c0"/>
<rect x="201" y="54" width="1" height="2" fill="#c0c0c0"/>
<path d="M209.5 60.5 L213.5 64.5" fill="none" stroke="#000" stroke-width="2.4" shape-rendering="geometricPrecision"/>
<path d="M210.0 61.0 L213.0 64.0" fill="none" stroke="#000080" stroke-width="1.2" shape-rendering="geometricPrecision"/>
<rect x="203" y="56" width="6" height="2" fill="#000080"/>
<rect x="205" y="54" width="2" height="6" fill="#000080"/>
<circle cx="229.5" cy="56.5" r="5.6" fill="#f4f4f4" stroke="#000" stroke-width="1.6" shape-rendering="geometricPrecision"/>
<rect x="226" y="53" width="2" height="1" fill="#c0c0c0"/>
<rect x="225" y="54" width="1" height="2" fill="#c0c0c0"/>
<path d="M233.5 60.5 L237.5 64.5" fill="none" stroke="#000" stroke-width="2.4" shape-rendering="geometricPrecision"/>
<path d="M234.0 61.0 L237.0 64.0" fill="none" stroke="#000080" stroke-width="1.2" shape-rendering="geometricPrecision"/>
<rect x="227" y="56" width="6" height="2" fill="#000080"/>
<path d="M260.5 52 V65 M254 58.5 H267" fill="none" stroke="#000" stroke-width="1.4" />
<path d="M260.5 51 L257.5 54 H263.5 Z M260.5 66 L257.5 63 H263.5 Z M253 58.5 L256 55.5 V61.5 Z M268 58.5 L265 55.5 V61.5 Z" fill="#000" stroke="none" stroke-width="1" />
<path d="M277.5 51.5 H290.5 V64.5 H277.5 Z" fill="none" stroke="#000" stroke-width="2" />
<path d="M281.5 55.5 H286.5 V60.5 H281.5 Z" fill="none" stroke="#000" stroke-width="1.5" />
<path d="M278 52 L281.5 55.5 M290 52 L286.5 55.5 M278 64 L281.5 60.5 M290 64 L286.5 60.5" fill="none" stroke="#000" stroke-width="0.8" />
<path d="M306.5 51.5 L303.5 54.5 L302.5 57.5 V60.5 L304.5 63.5" fill="none" stroke="#000" stroke-width="1.2" />
<path d="M302 61 H306 V65 H302 Z" fill="#000" stroke="none" stroke-width="1" />
<path d="M310.5 65.5 L313.5 62.5 L314.5 59.5 V56.5 L312.5 53.5" fill="none" stroke="#000" stroke-width="1.2" />
<path d="M310 51 H314 V55 H310 Z" fill="#000" stroke="none" stroke-width="1" />
<path d="M337.5 50.5 V59.5 H347.5 M337.5 59.5 L332.5 64.5" fill="none" stroke="#000" stroke-width="1" />
<path d="M332.5 55.5 H342.5 V64.5 H332.5 Z" fill="none" stroke="#000" stroke-width="1.5" />
<path d="M332.5 55.5 L337.5 50.5 H347.5 L342.5 55.5 M347.5 50.5 V59.5 L342.5 64.5" fill="none" stroke="#000" stroke-width="1.2" />
<path d="M356.5 55.5 H366.5 V64.5 H356.5 Z" fill="none" stroke="#000" stroke-width="1.5" />
<path d="M356.5 55.5 L361.5 50.5 H371.5 L366.5 55.5 M371.5 50.5 V59.5 L366.5 64.5" fill="none" stroke="#000" stroke-width="1.2" />
<path d="M385.5 50.5 V59.5 H395.5 M385.5 59.5 L380.5 64.5" fill="none" stroke="#808080" stroke-width="1" />
<path d="M380.5 55.5 H390.5 V64.5 H380.5 Z" fill="none" stroke="#000" stroke-width="1.5" />
<path d="M380.5 55.5 L385.5 50.5 H395.5 L390.5 55.5 M395.5 50.5 V59.5 L390.5 64.5" fill="none" stroke="#000" stroke-width="1.2" />
<path d="M405 59 H411 L418 53 H412 Z" fill="#000080" stroke="none" stroke-width="1" />
<path d="M411 59 L418 53 V59 L411 65 Z" fill="#0000ff" stroke="none" stroke-width="1" />
<rect x="405" y="59" width="6" height="6" fill="#808080"/>
<rect x="434" y="55" width="10" height="10" fill="#808080"/>
<path d="M434 55 L437 51 H447 L444 55 Z" fill="#000080" stroke="none" stroke-width="1" />
<path d="M444 55 L447 51 V62 L444 65 Z" fill="#0000ff" stroke="none" stroke-width="1" />
<rect x="463" y="50" width="17" height="3" fill="#000"/>
<rect x="467" y="51" width="1" height="1" fill="#fff"/>
<rect x="469" y="51" width="1" height="1" fill="#fff"/>
<rect x="471" y="51" width="1" height="1" fill="#fff"/>
<rect x="475" y="51" width="1" height="1" fill="#fff"/>
<rect x="477" y="51" width="1" height="1" fill="#fff"/>
<rect x="463" y="50" width="2" height="7" fill="#000"/>
<rect x="464" y="56" width="2" height="1" fill="#000"/>
<rect x="472" y="52" width="6" height="15" fill="#000"/>
<rect x="473" y="54" width="1" height="1" fill="#fff"/>
<rect x="476" y="54" width="1" height="1" fill="#fff"/>
<rect x="474" y="55" width="2" height="1" fill="#fff"/>
<rect x="473" y="57" width="1" height="1" fill="#fff"/>
<rect x="476" y="57" width="1" height="1" fill="#fff"/>
<rect x="474" y="58" width="2" height="1" fill="#fff"/>
<rect x="473" y="60" width="1" height="1" fill="#fff"/>
<rect x="476" y="60" width="1" height="1" fill="#fff"/>
<rect x="474" y="61" width="2" height="1" fill="#fff"/>
<rect x="473" y="63" width="1" height="1" fill="#fff"/>
<rect x="476" y="63" width="1" height="1" fill="#fff"/>
<rect x="474" y="64" width="2" height="1" fill="#fff"/>
<rect x="462" y="62" width="8" height="5" fill="#000"/>
<rect x="463" y="63" width="1" height="1" fill="#fff"/>
<rect x="463" y="65" width="1" height="1" fill="#fff"/>
<rect x="466" y="63" width="1" height="1" fill="#fff"/>
<rect x="466" y="65" width="1" height="1" fill="#fff"/>
<rect x="468" y="63" width="1" height="1" fill="#fff"/>
<rect x="468" y="65" width="1" height="1" fill="#fff"/>
<path d="M487 51.5 H492 L494 54 V56 L488.5 60 V63.5 L491 65.5 H494" fill="none" stroke="#808080" stroke-width="1.6" />
<path d="M497.5 56.5 L503.5 50.5 V58.5 L500.5 60.5 Z" fill="#ffff00" stroke="#000" stroke-width="1" />
<path d="M494.5 60.5 L497.5 56.5 L500.5 60.5 L496.5 62.5 Z" fill="#fff" stroke="#000" stroke-width="1" />
<path d="M493 65 L494.5 60.5 L496.8 62.8 Z" fill="#000" stroke="none" stroke-width="1" />
<path d="M511.5 52.5 H526.5 V63.5 H511.5 Z" fill="none" stroke="#000" stroke-width="1.2" />
<path d="M516.5 58.5 H526.5" fill="none" stroke="#000" stroke-width="1" />
<rect x="518" y="60" width="2" height="2" fill="#000"/>
<rect x="521" y="60" width="2" height="2" fill="#000"/>
<rect x="524" y="60" width="2" height="2" fill="#000"/>
<path d="M541.5 50.5 H549.5 L552.5 53.5 V64.5 H541.5 Z" fill="#fff" stroke="#000" stroke-width="1" />
<circle cx="549.5" cy="60" r="3.2" fill="#00c0c0" stroke="#000" stroke-width="1.2" shape-rendering="geometricPrecision"/>
<path d="M552 62.5 L555 65.5" fill="none" stroke="#000" stroke-width="1.8" />
<path d="M565.5 59.5 L567.5 56.5 H580.5 V62.5 L578.5 65.5 H565.5 Z" fill="#c0c0c0" stroke="#000" stroke-width="1" />
<path d="M566.5 61.5 H577.5 M567 64 H577" fill="none" stroke="#fff" stroke-width="1" />
<path d="M578.5 59.5 L580.5 57 M578.5 63 L580.5 60.5" fill="none" stroke="#000" stroke-width="0.8" />
<path d="M568 52 Q568 49 572 49 Q576 49 576 52 Q576 54.5 572.5 55.5 V58" fill="none" stroke="#0000ff" stroke-width="2" />
<rect x="571" y="60" width="3" height="2" fill="#0000ff"/>
<path d="M595 51 V64 L598 61 L601 66.5 L603 65.5 L600.5 60.5 H604.5 Z" fill="#000" stroke="none" stroke-width="1" />
<text x="603" y="65" font-family='"Liberation Sans", sans-serif' font-size="16" fill="#000080" font-weight="bold" >?</text>
<rect x="629" y="49" width="11" height="14" fill="#000"/>
<rect x="630" y="50" width="6" height="12" fill="url(#dith2w)"/>
<path d="M636.5 52.5 L638.5 50.5 V64.5 L636.5 66.5 Z" fill="#fff" stroke="#000" stroke-width="1" />
<rect x="637" y="57" width="1" height="2" fill="#000"/>
<path d="M623 64.5 H629 M639 64.5 H643" fill="none" stroke="#000" stroke-width="1" />
<path d="M623.5 53.5 H627 V51 L631 55 L627 59 V57 H623.5 Z" fill="#ff0000" stroke="#000" stroke-width="1" />
<path d="M10 82 L14 79 H20 L16 82 Z" fill="#000080" stroke="none" stroke-width="1" />
<path d="M16 82 L20 79 V84 L16 88 Z" fill="#0000ff" stroke="none" stroke-width="1" />
<rect x="10" y="82" width="6" height="5" fill="#808080"/>
<path d="M27 78.5 L29.5 79.5 Q31.5 81 29.5 82.3 L27.5 83 Q26 84.5 28.5 85.5 L30.5 86.8" fill="none" stroke="#000" stroke-width="1.1" shape-rendering="geometricPrecision"/>
<path d="M40 83.5 L43 80.5 H45 L46.5 77 L51.5 81.5 L48.5 84.5 H46.5 L44.5 88 Z" fill="#0000ff" stroke="none" stroke-width="1" />
<path d="M9 104 L20 93" fill="none" stroke="#000" stroke-width="1" />
<rect x="13" y="97" width="3" height="3" fill="#0000ff"/>
<path d="M26 96 H33 M26 98.5 H33 M29.5 94 V104" fill="none" stroke="#000" stroke-width="1" />
<rect x="28" y="102" width="3" height="3" fill="#000"/>
<path d="M10 125 L15 120 H26 V132 L22 136 H10 Z" fill="#808080" stroke="none" stroke-width="1" transform="translate(0,0)"/>
<path d="M10 136.5 H22 L26.5 132 V136.5" fill="none" stroke="#fff" stroke-width="1" transform="translate(0,0)"/>
<rect x="23" y="133" width="3" height="3" fill="#808080"/>
<path d="M34 125 L39 120 H50 V132 L46 136 H34 Z" fill="#808080" stroke="none" stroke-width="1" transform="translate(0,0)"/>
<path d="M34 136.5 H46 L50.5 132" fill="none" stroke="#fff" stroke-width="1" transform="translate(0,0)"/>
<path d="M14 144 H26 V155 L22 159 H10 V152 L12 150 V146 Z" fill="#808080" stroke="none" stroke-width="1" transform="translate(0,0)"/>
<path d="M10 160.5 H17 L19 158.5 H22 L26.5 155" fill="none" stroke="#fff" stroke-width="1" transform="translate(0,0)"/>
<rect x="23" y="157" width="3" height="3" fill="#808080"/>
<path d="M38 144 H50 V157 H34 V148 Z" fill="#808080" stroke="none" stroke-width="1" transform="translate(0,0)"/>
<path d="M34 160.5 H50.5 V144" fill="none" stroke="#fff" stroke-width="1" transform="translate(0,0)"/>
<path d="M47 157 H50 V160 H47 Z" fill="none" stroke="#fff" stroke-width="1" />
<path d="M10 172 L13 168 H20 Q26 170 26 178 V184 H10 Z" fill="#0000ff" stroke="#000080" stroke-width="1" />
<path d="M15 169 H20 Q24.5 171 25 178 H23 Q22.5 172.5 19 171 H15 Z" fill="#00ffff" stroke="none" stroke-width="1" />
<path d="M23 185 L27 181 V185 Z" fill="#000" stroke="none" stroke-width="1" />
<path d="M38 168 H50 V180 L46 184 H34 V172 Z" fill="#808080" stroke="none" stroke-width="1" transform="translate(0,0)"/>
<path d="M34 184.5 H46 L50.5 180 V168" fill="none" stroke="#fff" stroke-width="1" transform="translate(0,0)"/>
<rect x="41" y="175" width="3" height="2" fill="#fff"/>
<path d="M15 193 H26 V205 L21 210 H10 V204 L15 199 Z" fill="#808080" stroke="none" stroke-width="1" transform="translate(0,0)"/>
<path d="M10 210.5 H21 L26.5 205 V193" fill="none" stroke="#fff" stroke-width="1" transform="translate(0,0)"/>
<path d="M34.5 207.5 L36.5 198.5 L39.5 192.5 H46.5 L49.5 198.5 L50.5 203.5 V207.5 Z" fill="#0000ff" stroke="#000080" stroke-width="1" />
<path d="M39.5 192.5 H46.5 L47.5 194.5 H38.5 Z" fill="#00ffff" stroke="none" stroke-width="1" />
<path d="M46 193 L49 198.5 L50 203.5 V207 H47 V200 Z" fill="#000080" stroke="none" stroke-width="1" />
<path d="M10.5 219.5 L13.5 216.5 H25.5 V229.5 L22.5 232.5 H10.5 Z" fill="#000080" stroke="#000080" stroke-width="1" />
<rect x="11" y="220" width="10" height="12" fill="#0000ff"/>
<path d="M11 219.5 L14 217 H25 L22 219.5 Z" fill="#00ffff" stroke="none" stroke-width="1" />
<rect x="13" y="222" width="7" height="7" fill="#000080"/>
<rect x="14" y="223" width="5" height="5" fill="#0000ff"/>
<rect x="14" y="223" width="2" height="6" fill="#00ffff"/>
<rect x="14" y="227" width="6" height="2" fill="#00ffff"/>
<path d="M33.5 221.5 L38.5 215.5 L51.5 227.5 L47.5 232.5 H33.5 Z" fill="#0000ff" stroke="#000080" stroke-width="1" />
<path d="M34.5 222 L38.5 217 L50 227.5 L48.5 229.5 L38.5 220 L36.5 222.5 V231 H34.5 Z" fill="#00ffff" stroke="none" stroke-width="1" />
<path d="M37 228 L40 226 H46 L43 228 Z" fill="#00ffff" stroke="none" stroke-width="1" />
<path d="M47 234 L51 230 V234 Z" fill="#000" stroke="none" stroke-width="1" />
<rect x="10" y="242" width="14" height="14" fill="#00ffff"/>
<path d="M11 241.5 H25.5 V253 L23.5 255.5 V242 H11 Z" fill="#000080" stroke="none" stroke-width="1" />
<rect x="11" y="239" width="14" height="3" fill="#000080"/>
<path d="M12 251 L18 245 M16 255 L23 248" fill="none" stroke="#000080" stroke-width="2.4" stroke-linecap="round"/>
<circle cx="11.5" cy="250.5" r="1.5" fill="#000080" shape-rendering="geometricPrecision"/>
<circle cx="11.5" cy="255.5" r="1.5" fill="#000080" shape-rendering="geometricPrecision"/>
<circle cx="16.5" cy="255.5" r="1.5" fill="#000080" shape-rendering="geometricPrecision"/>
<circle cx="19.5" cy="244.5" r="1.5" fill="#000080" shape-rendering="geometricPrecision"/>
<circle cx="23.5" cy="247.5" r="1.5" fill="#000080" shape-rendering="geometricPrecision"/>
<circle cx="14.5" cy="248.5" r="1.5" fill="#000080" shape-rendering="geometricPrecision"/>
<path d="M22 256 L26 252 V256 Z" fill="#000" stroke="none" stroke-width="1" />
<rect x="34" y="244" width="17" height="12" fill="#0000ff"/>
<rect x="34" y="247" width="17" height="2" fill="#00ffff"/>
<rect x="34" y="241" width="4" height="3" fill="#00ffff"/>
<rect x="46" y="241" width="5" height="3" fill="#00ffff"/>
<rect x="38" y="241" width="2" height="6" fill="#000080"/>
<rect x="50" y="241" width="1" height="15" fill="#000080"/>
<path d="M37.5 256 V248.5 L45 241.5 V246" fill="none" stroke="#ff0000" stroke-width="1" />
<path d="M47 256 L51 252 V256 Z" fill="#000" stroke="none" stroke-width="1" />
<clipPath id="treeclip"><rect x="66" y="103" width="113" height="178"/></clipPath>
<g clip-path="url(#treeclip)">
<rect x="76" y="123" width="1" height="1" fill="#808080"/>
<rect x="76" y="125" width="1" height="1" fill="#808080"/>
<rect x="76" y="127" width="1" height="1" fill="#808080"/>
<rect x="76" y="129" width="1" height="1" fill="#808080"/>
<rect x="76" y="131" width="1" height="1" fill="#808080"/>
<rect x="76" y="133" width="1" height="1" fill="#808080"/>
<rect x="76" y="135" width="1" height="1" fill="#808080"/>
<rect x="76" y="137" width="1" height="1" fill="#808080"/>
<rect x="76" y="139" width="1" height="1" fill="#808080"/>
<rect x="76" y="141" width="1" height="1" fill="#808080"/>
<rect x="76" y="143" width="1" height="1" fill="#808080"/>
<rect x="76" y="145" width="1" height="1" fill="#808080"/>
<rect x="76" y="147" width="1" height="1" fill="#808080"/>
<rect x="76" y="149" width="1" height="1" fill="#808080"/>
<rect x="76" y="151" width="1" height="1" fill="#808080"/>
<rect x="76" y="153" width="1" height="1" fill="#808080"/>
<rect x="76" y="155" width="1" height="1" fill="#808080"/>
<rect x="76" y="157" width="1" height="1" fill="#808080"/>
<rect x="76" y="159" width="1" height="1" fill="#808080"/>
<rect x="76" y="161" width="1" height="1" fill="#808080"/>
<rect x="76" y="163" width="1" height="1" fill="#808080"/>
<rect x="76" y="165" width="1" height="1" fill="#808080"/>
<rect x="76" y="167" width="1" height="1" fill="#808080"/>
<rect x="76" y="169" width="1" height="1" fill="#808080"/>
<rect x="76" y="171" width="1" height="1" fill="#808080"/>
<rect x="76" y="173" width="1" height="1" fill="#808080"/>
<rect x="76" y="175" width="1" height="1" fill="#808080"/>
<rect x="76" y="177" width="1" height="1" fill="#808080"/>
<rect x="76" y="179" width="1" height="1" fill="#808080"/>
<rect x="76" y="181" width="1" height="1" fill="#808080"/>
<rect x="76" y="183" width="1" height="1" fill="#808080"/>
<rect x="76" y="185" width="1" height="1" fill="#808080"/>
<rect x="76" y="187" width="1" height="1" fill="#808080"/>
<rect x="76" y="189" width="1" height="1" fill="#808080"/>
<rect x="76" y="191" width="1" height="1" fill="#808080"/>
<rect x="76" y="193" width="1" height="1" fill="#808080"/>
<rect x="76" y="195" width="1" height="1" fill="#808080"/>
<rect x="76" y="197" width="1" height="1" fill="#808080"/>
<rect x="76" y="199" width="1" height="1" fill="#808080"/>
<rect x="76" y="201" width="1" height="1" fill="#808080"/>
<rect x="76" y="203" width="1" height="1" fill="#808080"/>
<rect x="76" y="205" width="1" height="1" fill="#808080"/>
<rect x="76" y="207" width="1" height="1" fill="#808080"/>
<rect x="76" y="209" width="1" height="1" fill="#808080"/>
<rect x="76" y="211" width="1" height="1" fill="#808080"/>
<rect x="76" y="213" width="1" height="1" fill="#808080"/>
<rect x="76" y="215" width="1" height="1" fill="#808080"/>
<rect x="76" y="217" width="1" height="1" fill="#808080"/>
<rect x="76" y="219" width="1" height="1" fill="#808080"/>
<rect x="76" y="221" width="1" height="1" fill="#808080"/>
<rect x="76" y="223" width="1" height="1" fill="#808080"/>
<rect x="76" y="225" width="1" height="1" fill="#808080"/>
<rect x="76" y="227" width="1" height="1" fill="#808080"/>
<rect x="76" y="229" width="1" height="1" fill="#808080"/>
<rect x="76" y="231" width="1" height="1" fill="#808080"/>
<rect x="76" y="233" width="1" height="1" fill="#808080"/>
<rect x="76" y="235" width="1" height="1" fill="#808080"/>
<rect x="76" y="237" width="1" height="1" fill="#808080"/>
<rect x="76" y="239" width="1" height="1" fill="#808080"/>
<rect x="76" y="241" width="1" height="1" fill="#808080"/>
<rect x="76" y="243" width="1" height="1" fill="#808080"/>
<rect x="76" y="245" width="1" height="1" fill="#808080"/>
<rect x="76" y="247" width="1" height="1" fill="#808080"/>
<rect x="76" y="249" width="1" height="1" fill="#808080"/>
<rect x="76" y="251" width="1" height="1" fill="#808080"/>
<rect x="76" y="253" width="1" height="1" fill="#808080"/>
<rect x="76" y="255" width="1" height="1" fill="#808080"/>
<rect x="76" y="257" width="1" height="1" fill="#808080"/>
<rect x="76" y="259" width="1" height="1" fill="#808080"/>
<rect x="76" y="261" width="1" height="1" fill="#808080"/>
<rect x="76" y="263" width="1" height="1" fill="#808080"/>
<rect x="76" y="265" width="1" height="1" fill="#808080"/>
<rect x="76" y="267" width="1" height="1" fill="#808080"/>
<rect x="76" y="269" width="1" height="1" fill="#808080"/>
<rect x="76" y="271" width="1" height="1" fill="#808080"/>
<rect x="76" y="273" width="1" height="1" fill="#808080"/>
<rect x="78" y="133" width="1" height="1" fill="#808080"/>
<rect x="80" y="133" width="1" height="1" fill="#808080"/>
<rect x="82" y="133" width="1" height="1" fill="#808080"/>
<rect x="84" y="133" width="1" height="1" fill="#808080"/>
<rect x="86" y="133" width="1" height="1" fill="#808080"/>
<rect x="88" y="133" width="1" height="1" fill="#808080"/>
<rect x="78" y="153" width="1" height="1" fill="#808080"/>
<rect x="80" y="153" width="1" height="1" fill="#808080"/>
<rect x="82" y="153" width="1" height="1" fill="#808080"/>
<rect x="84" y="153" width="1" height="1" fill="#808080"/>
<rect x="86" y="153" width="1" height="1" fill="#808080"/>
<rect x="88" y="153" width="1" height="1" fill="#808080"/>
<rect x="78" y="173" width="1" height="1" fill="#808080"/>
<rect x="80" y="173" width="1" height="1" fill="#808080"/>
<rect x="82" y="173" width="1" height="1" fill="#808080"/>
<rect x="84" y="173" width="1" height="1" fill="#808080"/>
<rect x="86" y="173" width="1" height="1" fill="#808080"/>
<rect x="88" y="173" width="1" height="1" fill="#808080"/>
<rect x="78" y="193" width="1" height="1" fill="#808080"/>
<rect x="80" y="193" width="1" height="1" fill="#808080"/>
<rect x="82" y="193" width="1" height="1" fill="#808080"/>
<rect x="84" y="193" width="1" height="1" fill="#808080"/>
<rect x="86" y="193" width="1" height="1" fill="#808080"/>
<rect x="88" y="193" width="1" height="1" fill="#808080"/>
<rect x="78" y="213" width="1" height="1" fill="#808080"/>
<rect x="80" y="213" width="1" height="1" fill="#808080"/>
<rect x="82" y="213" width="1" height="1" fill="#808080"/>
<rect x="84" y="213" width="1" height="1" fill="#808080"/>
<rect x="86" y="213" width="1" height="1" fill="#808080"/>
<rect x="88" y="213" width="1" height="1" fill="#808080"/>
<rect x="78" y="233" width="1" height="1" fill="#808080"/>
<rect x="80" y="233" width="1" height="1" fill="#808080"/>
<rect x="82" y="233" width="1" height="1" fill="#808080"/>
<rect x="84" y="233" width="1" height="1" fill="#808080"/>
<rect x="86" y="233" width="1" height="1" fill="#808080"/>
<rect x="88" y="233" width="1" height="1" fill="#808080"/>
<rect x="78" y="253" width="1" height="1" fill="#808080"/>
<rect x="80" y="253" width="1" height="1" fill="#808080"/>
<rect x="82" y="253" width="1" height="1" fill="#808080"/>
<rect x="84" y="253" width="1" height="1" fill="#808080"/>
<rect x="86" y="253" width="1" height="1" fill="#808080"/>
<rect x="88" y="253" width="1" height="1" fill="#808080"/>
<rect x="78" y="273" width="1" height="1" fill="#808080"/>
<rect x="80" y="273" width="1" height="1" fill="#808080"/>
<rect x="82" y="273" width="1" height="1" fill="#808080"/>
<rect x="84" y="273" width="1" height="1" fill="#808080"/>
<rect x="86" y="273" width="1" height="1" fill="#808080"/>
<rect x="88" y="273" width="1" height="1" fill="#808080"/>
<path d="M71.5 208.5 H81.5 V218.5 H71.5 Z" fill="#fff" stroke="#808080" stroke-width="1" />
<rect x="73" y="213" width="7" height="1" fill="#000"/>
<rect x="76" y="210" width="1" height="7" fill="#000"/>
<path d="M71.5 228.5 H81.5 V238.5 H71.5 Z" fill="#fff" stroke="#808080" stroke-width="1" />
<rect x="73" y="233" width="7" height="1" fill="#000"/>
<rect x="76" y="230" width="1" height="7" fill="#000"/>
<path d="M71.5 248.5 H81.5 V258.5 H71.5 Z" fill="#fff" stroke="#808080" stroke-width="1" />
<rect x="73" y="253" width="7" height="1" fill="#000"/>
<rect x="76" y="250" width="1" height="7" fill="#000"/>
<path d="M71.5 268.5 H81.5 V278.5 H71.5 Z" fill="#fff" stroke="#808080" stroke-width="1" />
<rect x="73" y="273" width="7" height="1" fill="#000"/>
<rect x="76" y="270" width="1" height="7" fill="#000"/>
<path d="M68.5 108.5 L71.5 105.5 H80.5 L84.5 109.5 V116.5 L80.5 120.5 H68.5 Z" fill="#00ffff" stroke="#0000ff" stroke-width="1" />
<path d="M80.5 109.5 L84.5 109.5 V116.5 L80.5 120.5 Z" fill="#0000ff" stroke="none" stroke-width="1" />
<path d="M68.5 108.5 L71.5 105.5 H80.5 L84.5 109.5 V116.5 L80.5 120.5 H68.5 Z" fill="none" stroke="#000080" stroke-width="1.2" />
<circle cx="74.5" cy="114" r="3.8" fill="#0000c0" stroke="#000080" stroke-width="1" shape-rendering="geometricPrecision"/>
<rect x="74" y="112" width="2" height="2" fill="#fff"/>
<rect x="72" y="116" width="2" height="1" fill="#00ffff"/>
<rect x="79" y="107" width="2" height="2" fill="#00ffff"/>
<rect x="81" y="109" width="1" height="1" fill="#00ffff"/>
<path d="M92 127 H98 L99 128 H104 V140 H98 L97 139 H92 Z" fill="#808000" stroke="none" stroke-width="1" />
<rect x="98" y="125" width="1" height="17" fill="#808080"/>
<rect x="90" y="132" width="16" height="1" fill="#808080"/>
<rect x="92" y="134" width="13" height="1" fill="#808080"/>
<path d="M92 147 H98 L99 148 H104 V160 H98 L97 159 H92 Z" fill="#808000" stroke="none" stroke-width="1" />
<rect x="98" y="145" width="1" height="17" fill="#808080"/>
<rect x="90" y="152" width="16" height="1" fill="#808080"/>
<rect x="92" y="154" width="13" height="1" fill="#808080"/>
<path d="M92 167 H98 L99 168 H104 V180 H98 L97 179 H92 Z" fill="#808000" stroke="none" stroke-width="1" />
<rect x="98" y="165" width="1" height="17" fill="#808080"/>
<rect x="90" y="172" width="16" height="1" fill="#808080"/>
<rect x="92" y="174" width="13" height="1" fill="#808080"/>
<rect x="97" y="192" width="3" height="3" fill="#00ffff"/>
<rect x="98" y="184" width="1" height="8" fill="#000080"/>
<rect x="97" y="186" width="3" height="2" fill="#000080"/>
<rect x="100" y="193" width="8" height="1" fill="#000080"/>
<rect x="104" y="192" width="2" height="3" fill="#000080"/>
<path d="M96.5 195.5 L91 201" fill="none" stroke="#000080" stroke-width="1.2" />
<rect x="92" y="198" width="3" height="2" fill="#000080"/>
<path d="M91 209 L95 205 H106 V216 L102 220 H91 Z" fill="#000080" stroke="none" stroke-width="1" />
<rect x="92" y="210" width="10" height="10" fill="#0000ff"/>
<path d="M92 209 L96 206 H105 L101 209 Z" fill="#00ffff" stroke="none" stroke-width="1" />
<path d="M93.5 229.5 L97.5 225.5 H106.5 V236.5 L103.5 239.5 H93.5 Z" fill="#0000ff" stroke="#000080" stroke-width="1" />
<path d="M103.5 229.5 L106.5 226 V236.5 L103.5 239.5 Z" fill="#000080" stroke="none" stroke-width="1" />
<rect x="96" y="230" width="9" height="2" fill="#00ffff"/>
<rect x="103" y="230" width="2" height="8" fill="#00ffff"/>
<path d="M91.5 234.5 L94.5 231.5 H100.5 V237.5 L98.5 240.5 H91.5 Z" fill="#0000ff" stroke="#000080" stroke-width="1" />
<path d="M98.5 234.5 L100.5 232 V237.5 L98.5 240 Z" fill="#000080" stroke="none" stroke-width="1" />
<rect x="92" y="235" width="6" height="5" fill="#00ffff"/>
<path d="M93.5 249.5 L97.5 245.5 H106.5 V256.5 L103.5 259.5 H93.5 Z" fill="#0000ff" stroke="#000080" stroke-width="1" />
<path d="M103.5 249.5 L106.5 246 V256.5 L103.5 259.5 Z" fill="#000080" stroke="none" stroke-width="1" />
<rect x="96" y="250" width="9" height="2" fill="#00ffff"/>
<rect x="103" y="250" width="2" height="8" fill="#00ffff"/>
<path d="M91.5 254.5 L94.5 251.5 H100.5 V257.5 L98.5 260.5 H91.5 Z" fill="#0000ff" stroke="#000080" stroke-width="1" />
<path d="M98.5 254.5 L100.5 252 V257.5 L98.5 260 Z" fill="#000080" stroke="none" stroke-width="1" />
<rect x="92" y="255" width="6" height="5" fill="#00ffff"/>
<path d="M91 269 L95 265 H106 V276 L102 280 H91 Z" fill="#000080" stroke="none" stroke-width="1" />
<path d="M92 269 L96 266 H105 L101 269 Z" fill="#0000ff" stroke="none" stroke-width="1" />
<rect x="92" y="270" width="11" height="10" fill="#00ffff"/>
<rect x="94" y="272" width="7" height="6" fill="#000080"/>
<rect x="96" y="274" width="3" height="3" fill="#00ffff"/>
<text transform="translate(92 117) scale(0.932 1)" x="0" y="0" font-family='"Liberation Sans", sans-serif' font-size="12" fill="#000" >Деталь</text>
<text transform="translate(117 137) scale(0.92 1)" x="0" y="0" font-family='"Liberation Sans", sans-serif' font-size="12" fill="#000" >Фронтальная плоскость</text>
<text transform="translate(117 157) scale(0.92 1)" x="0" y="0" font-family='"Liberation Sans", sans-serif' font-size="12" fill="#000" >Горизонтальная плоскость</text>
<text transform="translate(117 177) scale(0.92 1)" x="0" y="0" font-family='"Liberation Sans", sans-serif' font-size="12" fill="#000" >Профильная плоскость</text>
<text transform="translate(117 197) scale(0.92 1)" x="0" y="0" font-family='"Liberation Sans", sans-serif' font-size="12" fill="#000" >Начало координат</text>
<text transform="translate(117 217) scale(0.92 1)" x="0" y="0" font-family='"Liberation Sans", sans-serif' font-size="12" fill="#000" >Операция выдавливания</text>
<text transform="translate(117 237) scale(0.92 1)" x="0" y="0" font-family='"Liberation Sans", sans-serif' font-size="12" fill="#000" >Приклеить элемент</text>
<text transform="translate(117 257) scale(0.92 1)" x="0" y="0" font-family='"Liberation Sans", sans-serif' font-size="12" fill="#000" >Приклеить элемент</text>
<text transform="translate(117 277) scale(0.92 1)" x="0" y="0" font-family='"Liberation Sans", sans-serif' font-size="12" fill="#000" >Вырезать элемент</text>
</g>
<path d="M70.5 281.5 H175.5 A1.5 1.5 0 0 1 175.5 284.5 H70.5 A1.5 1.5 0 0 1 70.5 281.5 Z" fill="#fff" stroke="#000" stroke-width="1" shape-rendering="geometricPrecision"/>
<path d="M6 746 Q9 744.5 12.5 746 L11.5 751 Q8.5 749.5 5 751 Z" fill="#f05020" stroke="none" stroke-width="1" />
<path d="M13 746.5 Q16 748 19.5 746 L18.5 751.5 Q15.5 753 12 751.5 Z" fill="#50c030" stroke="none" stroke-width="1" />
<path d="M5 751.5 Q8 750 11.5 751.5 L10.5 757 Q7.5 755.5 4 757 Z" fill="#2870f0" stroke="none" stroke-width="1" />
<path d="M12 752 Q15 753.5 18.5 752 L17.5 757.5 Q14.5 759 11 757.5 Z" fill="#f8c010" stroke="none" stroke-width="1" />
<path d="M68 754.5 L72.5 750.5 H79.5 L84 754.5 Z" fill="#f4f4f4" stroke="#909090" stroke-width="0.8" />
<path d="M68 754.5 H84 V757 L82 759 H70 L68 757 Z" fill="#b8b8b8" stroke="#707070" stroke-width="0.8" />
<path d="M72 751.5 L76 752 L78 751" fill="none" stroke="#ffffff" stroke-width="1" />
<rect x="80" y="755" width="2" height="2" fill="#505080"/>
<rect x="91" y="752" width="6" height="9" fill="#0000ff"/>
<path d="M91.5 752.5 H96.5 V760.5 H91.5 Z" fill="none" stroke="#000080" stroke-width="1" />
<rect x="93" y="754" width="2" height="2" fill="#00ffff"/>
<ellipse cx="102" cy="753" rx="2.5" ry="3.5" fill="none" stroke="#000" stroke-width="1.5" shape-rendering="geometricPrecision"/>
<rect x="97" y="757" width="10" height="2" fill="#808000"/>
<path d="M113.5 754 L121.5 746 L130 753.5 L121.5 761.5 Z" fill="#fff" stroke="#000" stroke-width="1.2" />
<path d="M129 746 L116.5 753.5 H122.5 L114.5 761.5 L127.5 753 H121.5 Z" fill="#ffa020" stroke="#b05000" stroke-width="0.6" />
<g fill="none" stroke="#ffff00" stroke-width="1.2" shape-rendering="geometricPrecision"><circle cx="168.5" cy="754" r="6.3"/><path d="M165.5 750 V758 M165.5 754 L169 750.5 M165.5 754 L171 759"/></g>
<path d="M324.5 749.5 H328.5 L330 751 H337.5 V760.5 H324.5 Z" fill="#ffe080" stroke="#806000" stroke-width="1" />
<path d="M324.5 753.5 H337.5 V760.5 H324.5 Z" fill="#f0c040" stroke="#806000" stroke-width="1" />
<path d="M488.5 746.5 H496.5 L499.5 749.5 V761.5 H488.5 Z" fill="#fff" stroke="#000" stroke-width="1" />
<path d="M486.5 748.5 H494.5 V756.5 H486.5 Z" fill="#fff" stroke="#000080" stroke-width="1" />
<text x="487" y="756" font-family='"Liberation Sans", sans-serif' font-size="8" fill="#000080" font-weight="bold" >W</text>
<rect x="941" y="750" width="8" height="7" fill="#303070"/>
<rect x="947" y="747" width="7" height="6" fill="#303070"/>
<path d="M941.5 759 H949" fill="none" stroke="#8080ff" stroke-width="1" />
<path d="M948 753 L955 761 M955 753 L948 761" fill="none" stroke="#ff2020" stroke-width="2" />
<circle cx="964" cy="752.5" r="5.5" fill="#707070" stroke="#303030" stroke-width="1.5" shape-rendering="geometricPrecision"/>
<rect x="962" y="750" width="2" height="2" fill="#e0e0e0"/>
<path d="M968 759 Q972 757 973 753" fill="none" stroke="#a0a0ff" stroke-width="1" />
<g shape-rendering="geometricPrecision">
<ellipse cx="694.3" cy="342.9" rx="58.3" ry="116.4" transform="rotate(-6.6 694.3 342.9)" fill="url(#rimg)"/>
<polygon points="647.9213156826303,231.07141008411384 680.9213156826303,227.27141008411382 707.6786843173696,458.52858991588613 674.6786843173696,462.32858991588614" fill="url(#rimg)"/>
<ellipse cx="661.3" cy="346.7" rx="58.3" ry="116.4" transform="rotate(-6.6 661.3 346.7)" fill="#9c9c9c"/>
<ellipse cx="662.3" cy="347.0" rx="38.8" ry="77.0" transform="rotate(-6.6 662.3 347.0)" fill="url(#shg)"/>
<polygon points="388.04983941204927,301.41029704876945 653.4498394120492,270.5102970487695 671.1501605879507,423.4897029512305 405.7501605879507,454.3897029512305" fill="url(#shg)"/>
<ellipse cx="396.9" cy="377.9" rx="38.8" ry="77.0" transform="rotate(-6.6 396.9 377.9)" fill="#9c9c9c"/>
<polygon points="369.1,327.2 401.6,323.3 426.1,396.25 393.3,400.2" fill="#868686"/>
<polygon points="393.3,400.2 426.1,396.25 391.6,431.4 358.9,435.3" fill="#575757"/>
<polygon points="334.4,363.4 369.1,327.2 393.3,400.2 358.9,435.3" fill="#9c9c9c"/>
<ellipse cx="364" cy="381.7" rx="9.6" ry="18.6" transform="rotate(-6.6 364 381.7)" fill="url(#holeg)"/>
</g>
</svg>
</body></html>
